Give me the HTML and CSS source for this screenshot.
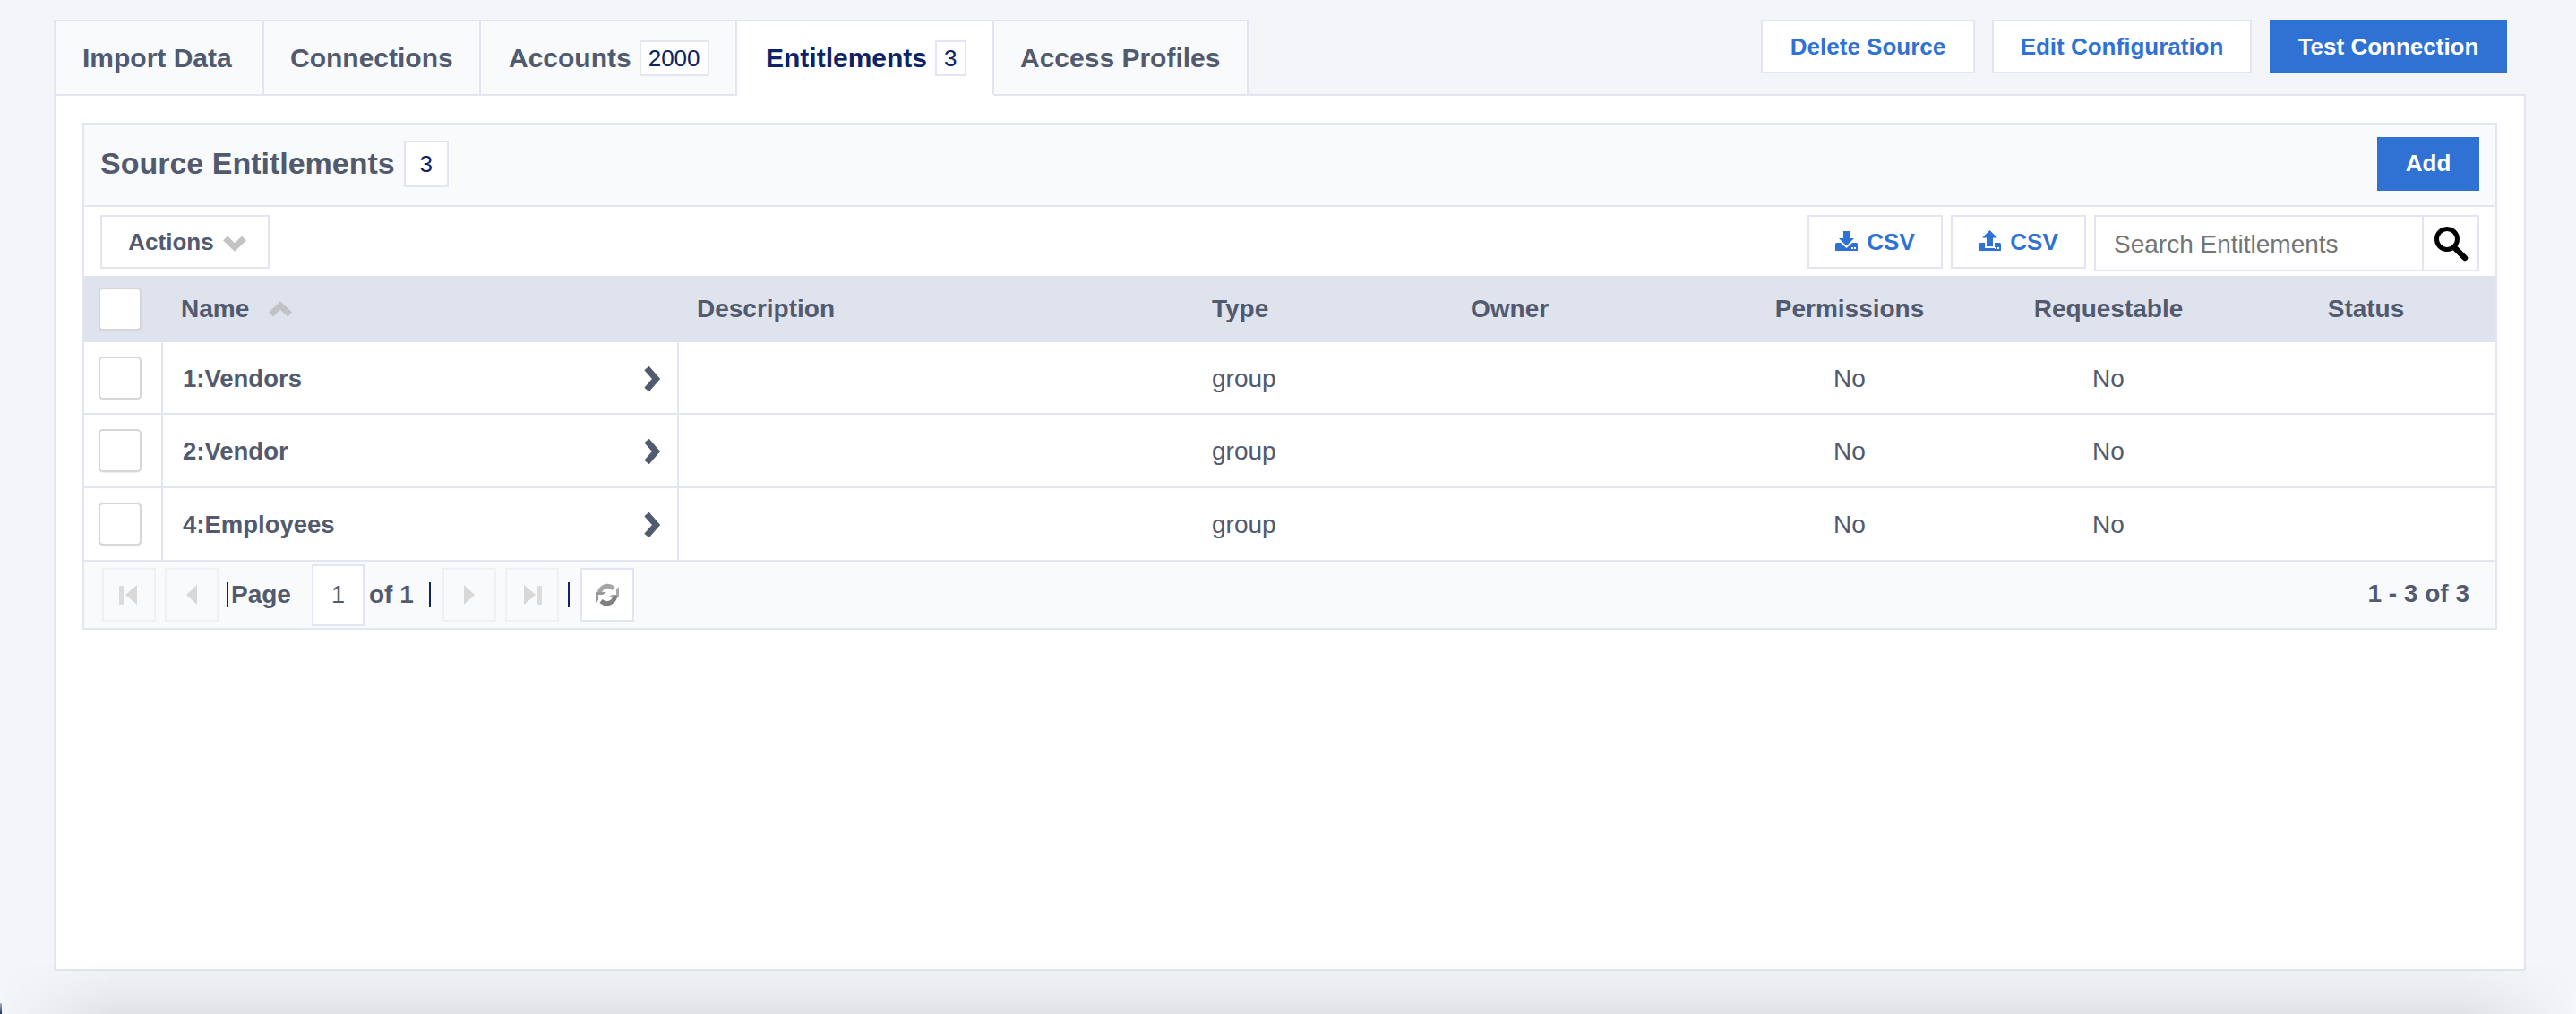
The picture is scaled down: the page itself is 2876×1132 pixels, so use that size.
FILE: index.html
```html
<!DOCTYPE html>
<html lang="en">
<head>
<meta charset="utf-8">
<title>Source Entitlements</title>
<link rel="stylesheet" href="styles.css">
</head>
<body>
<div class="page">
  <div class="topbar">
    <nav class="tabs">
      <a class="tab tab-import">Import Data</a>
      <a class="tab tab-conn">Connections</a>
      <a class="tab tab-acc">Accounts<span class="count">2000</span></a>
      <a class="tab tab-ent active">Entitlements<span class="count">3</span></a>
      <a class="tab tab-prof">Access Profiles</a>
    </nav>
    <div class="actions">
      <button class="btn btn-outline btn-delete">Delete Source</button>
      <button class="btn btn-outline btn-edit">Edit Configuration</button>
      <button class="btn btn-primary btn-test">Test Connection</button>
    </div>
  </div>
  <main class="panel">
    <section class="card">
      <header class="card-head">
        <div class="title-wrap">
          <h1 class="title">Source Entitlements</h1>
          <span class="count count-title">3</span>
        </div>
        <button class="btn btn-primary btn-add">Add</button>
      </header>
      <div class="toolbar">
        <button class="tool-btn actions-btn">Actions
          <svg class="chev-down" width="26" height="18" viewBox="0 0 26 18"><path d="M2.5 3 L13 13 L23.5 3" fill="none" stroke="#c4c4c4" stroke-width="7"/></svg>
        </button>
        <div class="toolbar-right">
          <button class="tool-btn csv-btn">
            <svg width="25" height="22" viewBox="0 0 25 22"><path fill="#3071d4" d="M9 0h7v8h5l-8.500 8.500L4 8h5z"/><path fill="#3071d4" d="M1.500 13H6l6.500 6 6.500-6h4.500a1.500 1.500 0 0 1 1.500 1.500V22H0v-7.500A1.500 1.500 0 0 1 1.500 13z"/><rect x="18" y="18" width="2" height="2" fill="#fff"/><rect x="21" y="18" width="2" height="2" fill="#fff"/></svg>
            CSV
          </button>
          <button class="tool-btn csv-btn">
            <svg width="25" height="23" viewBox="0 0 25 23"><path fill="#3071d4" d="M12.500 0L21 8.500h-5V18H9V8.500H4z"/><path fill="#3071d4" d="M1.500 14H7v6h11v-6h5.500a1.500 1.500 0 0 1 1.500 1.500V23H0v-7.500A1.500 1.500 0 0 1 1.500 14z"/><rect x="18" y="19" width="2" height="2" fill="#fff"/><rect x="21" y="19" width="2" height="2" fill="#fff"/></svg>
            CSV
          </button>
          <div class="search">
            <input class="search-input" type="text" placeholder="Search Entitlements">
            <span class="search-icon">
              <svg width="42" height="42" viewBox="0 0 42 42"><circle cx="17" cy="16" r="11.500" fill="none" stroke="#000" stroke-width="5"/><path d="M25 25 L37 37" stroke="#000" stroke-width="6.500" stroke-linecap="round"/></svg>
            </span>
          </div>
        </div>
      </div>
      <table class="grid">
        <colgroup>
          <col class="c-check"><col class="c-name"><col class="c-desc"><col class="c-type"><col class="c-owner"><col class="c-perm"><col class="c-req"><col class="c-status">
        </colgroup>
        <thead>
          <tr>
            <th class="check-cell"><span class="checkbox checkbox-head"></span></th>
            <th class="th-name">Name
              <svg class="chev-up" width="26" height="18" viewBox="0 0 26 18"><path d="M2.500 15 L13 5 L23.500 15" fill="none" stroke="#c0c2c4" stroke-width="7"/></svg>
            </th>
            <th>Description</th>
            <th>Type</th>
            <th>Owner</th>
            <th class="center">Permissions</th>
            <th class="center">Requestable</th>
            <th class="center status">Status</th>
          </tr>
        </thead>
        <tbody>
          <tr>
            <td class="check-cell ruled"><span class="checkbox"></span></td>
            <td class="name ruled"><div class="name-inner">1:Vendors<svg width="20" height="28" viewBox="0 0 20 28"><path d="M4 2 L14.500 14 L4 26" fill="none" stroke="#515a6e" stroke-width="7"/></svg></div></td>
            <td></td><td>group</td><td></td><td class="center">No</td><td class="center">No</td><td></td>
          </tr>
          <tr>
            <td class="check-cell ruled"><span class="checkbox"></span></td>
            <td class="name ruled"><div class="name-inner">2:Vendor<svg width="20" height="28" viewBox="0 0 20 28"><path d="M4 2 L14.500 14 L4 26" fill="none" stroke="#515a6e" stroke-width="7"/></svg></div></td>
            <td></td><td>group</td><td></td><td class="center">No</td><td class="center">No</td><td></td>
          </tr>
          <tr>
            <td class="check-cell ruled"><span class="checkbox"></span></td>
            <td class="name ruled"><div class="name-inner">4:Employees<svg width="20" height="28" viewBox="0 0 20 28"><path d="M4 2 L14.500 14 L4 26" fill="none" stroke="#515a6e" stroke-width="7"/></svg></div></td>
            <td></td><td>group</td><td></td><td class="center">No</td><td class="center">No</td><td></td>
          </tr>
        </tbody>
      </table>
      <footer class="pager">
        <div class="pager-left">
          <span class="pg-btn"><svg width="24" height="26" viewBox="0 0 24 26"><rect x="1" y="3" width="5" height="21" fill="#dcdcdc"/><path d="M21 2v22L8 13z" fill="#d8d8d8"/></svg></span>
          <span class="pg-btn pg-gap"><svg width="14" height="26" viewBox="0 0 14 26"><path d="M13 2v22L1 13z" fill="#d8d8d8"/></svg></span>
          <span class="pg-sep pg-sep-page"></span>
          <span class="pg-label">Page</span>
          <span class="pg-input">1</span>
          <span class="pg-label pg-of">of 1</span>
          <span class="pg-sep pg-sep-of"></span>
          <span class="pg-btn pg-next"><svg width="14" height="26" viewBox="0 0 14 26"><path d="M1 2v22l12-11z" fill="#d8d8d8"/></svg></span>
          <span class="pg-btn pg-gap"><svg width="24" height="26" viewBox="0 0 24 26"><path d="M3 2v22l13-11z" fill="#d8d8d8"/><rect x="18" y="3" width="5" height="21" fill="#dcdcdc"/></svg></span>
          <span class="pg-sep pg-sep-last"></span>
          <span class="pg-btn pg-refresh">
            <svg width="28" height="30" viewBox="0 0 28 30">
              <path d="M5 14C6 7 14 2 21 8" fill="none" stroke="#a6a6a6" stroke-width="5"/>
              <path d="M27 6V18H15l4-3h5V9z" fill="#a8a8a8"/>
              <path d="M23 16C22 23 14 28 7 22" fill="none" stroke="#808080" stroke-width="5"/>
              <path d="M1 24V12H13l-4 3H4v6z" fill="#9a9a9a"/>
            </svg>
          </span>
        </div>
        <span class="pg-total">1 - 3 of 3</span>
      </footer>
    </section>
  </main>
</div>
<div class="bottom-shade"></div>
<div class="corner-mark"></div>
</body>
</html>
```

FILE: styles.css
```css
* { box-sizing: border-box; }

html, body { height: 100%; }

body {
  margin: 0;
  background: #f3f5f9;
  font-family: "Liberation Sans", Arial, sans-serif;
  color: #515a6e;
  overflow: hidden;
  position: relative;
}

.page {
  width: 2760px;
  margin-left: 60px;
  padding-top: 22px;
}

.topbar {
  display: flex;
  justify-content: space-between;
  align-items: flex-start;
  height: 83px;
  padding-right: 21px;
}

.tabs { display: flex; position: relative; z-index: 1; }

.tab {
  display: flex;
  align-items: center;
  height: 85px;
  background: #f9fafc;
  border: 2px solid #e3e6f0;
  border-left: 0;
  font-size: 30px;
  font-weight: 700;
  white-space: nowrap;
}

.tab-import { width: 235px; padding-left: 30px; border-left: 2px solid #e3e6f0; }
.tab-conn { width: 242px; padding-left: 29px; }
.tab-acc { width: 286px; padding-left: 31px; }
.tab-ent { width: 287px; padding-left: 32px; }
.tab-prof { width: 284px; padding-left: 29px; }

.tab.active {
  background: #fff;
  color: #0d2366;
  border-bottom-color: #fff;
}

.count {
  display: inline-block;
  margin-left: 9px;
  padding: 0 8px;
  height: 40px;
  line-height: 36px;
  background: #fff;
  border: 2px solid #e3e6f0;
  color: #0d2366;
  font-size: 26px;
  font-weight: 400;
}

.actions { display: flex; }

.btn {
  height: 60px;
  padding: 0;
  font-family: inherit;
  font-size: 26px;
  font-weight: 700;
  cursor: pointer;
}

.btn-outline {
  background: #fff;
  border: 2px solid #e3e6f0;
  color: #3071d4;
}

.btn-primary {
  background: #3071d4;
  border: 0;
  color: #fff;
}

.btn-delete { width: 239px; margin-right: 19px; }
.btn-edit { width: 290px; margin-right: 20px; }
.btn-test { width: 265px; }
.btn-add { width: 114px; margin-top: -3px; }

.panel {
  height: 979px;
  padding: 30px;
  background: #fff;
  border: 2px solid #e3e6f0;
}

.card { border: 2px solid #e3e6f0; }

.card-head {
  display: flex;
  justify-content: space-between;
  align-items: center;
  height: 92px;
  padding: 0 18px;
  background: #f9fafc;
  border-bottom: 2px solid #e3e6f0;
}

.title-wrap { display: flex; align-items: center; margin-top: -3px; }

.title {
  margin: 0;
  font-size: 34px;
  font-weight: 700;
}

.count-title {
  width: 50px;
  height: 52px;
  line-height: 48px;
  padding: 0;
  margin-left: 10px;
  text-align: center;
}

.toolbar {
  display: flex;
  justify-content: space-between;
  align-items: flex-start;
  height: 77px;
  padding: 9px 18px 0;
}

.toolbar-right { display: flex; }

.tool-btn {
  height: 60px;
  padding: 0;
  background: #fff;
  border: 2px solid #e3e6f0;
  font-family: inherit;
  font-size: 26px;
  font-weight: 700;
  display: inline-flex;
  align-items: center;
  justify-content: center;
}

.actions-btn { width: 189px; color: #515a6e; gap: 10px; padding-left: 5px; }
.chev-down { margin-top: 4px; }

.csv-btn { width: 151px; margin-right: 9px; color: #3071d4; gap: 10px; }
.csv-btn svg { margin-top: -3px; }

.search {
  display: flex;
  width: 430px;
  height: 63px;
  border: 2px solid #e3e6f0;
  background: #fff;
}

.search-input {
  flex: 1;
  min-width: 0;
  padding: 2px 0 0 20px;
  border: 0;
  border-right: 2px solid #e3e6f0;
  outline: 0;
  font-family: inherit;
  font-size: 28px;
  color: #757575;
}

.search-input::placeholder { color: #757575; opacity: 1; }

.search-icon {
  width: 60px;
  display: flex;
  align-items: center;
  justify-content: center;
}

.grid {
  width: 100%;
  table-layout: fixed;
  border-collapse: separate;
  border-spacing: 0;
}

.c-check { width: 88px; }
.c-name { width: 576px; }
.c-desc { width: 575px; }
.c-type { width: 289px; }
.c-owner { width: 314px; }
.c-perm { width: 258px; }
.c-req { width: 320px; }
.c-status { width: 272px; }

.grid th {
  height: 74px;
  padding: 0 0 0 20px;
  background: #dfe3ed;
  font-size: 28px;
  font-weight: 700;
  text-align: left;
  white-space: nowrap;
}

.grid .th-name { padding-left: 20px; }
.grid th.center, .grid td.center { text-align: center; padding-left: 0; }
.grid th.status { padding-right: 17px; }
.chev-up { margin-left: 14px; vertical-align: 0; }

.grid td {
  height: 82px;
  padding: 2px 0 0 20px;
  border-bottom: 2px solid #e3e6f0;
  font-size: 28px;
}

.grid tbody tr:first-child td { height: 81px; }

.grid th.check-cell, .grid td.check-cell { padding: 0 0 0 16px; }
.grid .ruled { border-right: 2px solid #e3e6f0; }

.checkbox {
  display: block;
  width: 48px;
  height: 48px;
  background: #fff;
  border: 2px solid #d4d6d8;
  border-radius: 5px;
  box-shadow: 0 1px 1px rgba(0, 0, 0, .08);
}

.grid td.name { font-weight: 700; font-size: 27.5px; padding-left: 22px; }

.name-inner {
  display: flex;
  justify-content: space-between;
  align-items: center;
  padding-right: 18px;
}

.pager {
  display: flex;
  justify-content: space-between;
  align-items: center;
  height: 74px;
  padding: 0 29px 0 20px;
  background: #f9fafc;
}

.pager-left { display: flex; align-items: center; }

.pg-btn {
  display: flex;
  align-items: center;
  justify-content: center;
  width: 60px;
  height: 60px;
  border: 2px solid #eff1f6;
}

.pg-gap { margin-left: 10px; }
.pg-next { margin-left: 13px; }

.pg-refresh {
  margin-left: 12px;
  background: #fff;
  border-color: #e3e6f0;
}

.pg-sep {
  width: 2px;
  height: 28px;
  background: #0d2366;
}

.pg-sep-page { margin-left: 9px; }
.pg-sep-of { margin-left: 17px; }
.pg-sep-last { margin-left: 10px; }

.pg-label { font-size: 28px; font-weight: 700; }
.pg-sep-page + .pg-label { margin-left: 3px; }

.pg-input {
  display: flex;
  align-items: center;
  justify-content: center;
  width: 59px;
  height: 69px;
  margin-left: 23px;
  background: #fff;
  border: 2px solid #e3e6f0;
  font-size: 27px;
}

.pg-of { margin-left: 5px; }

.pg-total { font-size: 28px; font-weight: 700; margin-top: -2px; }

.bottom-shade {
  position: absolute;
  left: 0;
  right: 0;
  bottom: 0;
  height: 62px;
  background: linear-gradient(to bottom, rgba(0, 0, 0, 0), rgba(0, 0, 0, .03) 50%, rgba(0, 0, 0, .075));
  -webkit-mask-image: linear-gradient(to right, transparent, #000 130px, #000 2746px, transparent);
  mask-image: linear-gradient(to right, transparent, #000 130px, #000 2746px, transparent);
}

.corner-mark {
  position: absolute;
  left: 0;
  bottom: 0;
  width: 2px;
  height: 12px;
  background: linear-gradient(to bottom, #a9b4c4, #1d3557);
}
```
